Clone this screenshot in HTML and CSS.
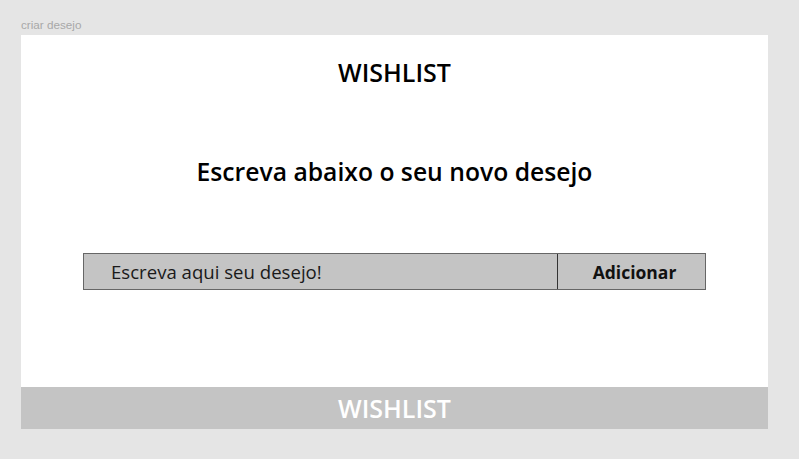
FILE: index.html
```html
<!DOCTYPE html>
<html lang="pt">
<head>
<meta charset="utf-8">
<title>criar desejo</title>
<link rel="stylesheet" href="styles.css">
</head>
<body>
<div class="frame-label">criar desejo</div>
<div class="frame">
  <main class="page">
    <h1 class="brand">WISHLIST</h1>
    <h2 class="prompt">Escreva abaixo o seu novo desejo</h2>
    <form class="wish-form">
      <div class="wish-input">Escreva aqui seu desejo!</div>
      <button type="button" class="wish-btn">Adicionar</button>
    </form>
  </main>
  <footer class="footer">WISHLIST</footer>
</div>
</body>
</html>
```
FILE: styles.css
```css
html, body {
  margin: 0;
  padding: 0;
}
body {
  background: #e5e5e5;
  width: 799px;
  height: 459px;
  overflow: hidden;
  font-family: "Open Sans", "Noto Sans", sans-serif;
}
.frame-label {
  font-family: "Liberation Sans", Arial, sans-serif;
  font-size: 11.7px;
  line-height: 14px;
  color: #a8a8a8;
  padding: 18px 0 0 21px;
  height: 17px;
}
.frame {
  margin-left: 21px;
  width: 747px;
}
.page {
  background: #fff;
  height: 352px;
  display: flex;
  flex-direction: column;
  align-items: center;
}
.brand {
  margin: 21px 0 0;
  font-size: 25px;
  line-height: 32px;
  font-weight: 600;
  color: #000;
}
.prompt {
  margin: 68px 0 0;
  font-size: 24.7px;
  line-height: 32px;
  font-weight: 600;
  color: #000;
}
.wish-form {
  margin-top: 65px;
  display: flex;
  width: 623px;
  height: 37px;
  border: 1px solid #666;
  background: #c4c4c4;
  box-sizing: border-box;
}
.wish-input {
  flex: 1;
  border-right: 1px solid #333;
  padding-left: 27px;
  font-size: 18.6px;
  line-height: 35px;
  color: #1a1a1a;
}
.wish-btn {
  width: 147px;
  border: 0;
  background: transparent;
  padding: 0 0 0 6px;
  font-family: inherit;
  font-size: 17.5px;
  font-weight: 700;
  color: #111;
}
.footer {
  background: #c4c4c4;
  height: 42px;
  color: #fff;
  text-align: center;
  font-size: 25px;
  line-height: 42px;
  font-weight: 600;
}
```
